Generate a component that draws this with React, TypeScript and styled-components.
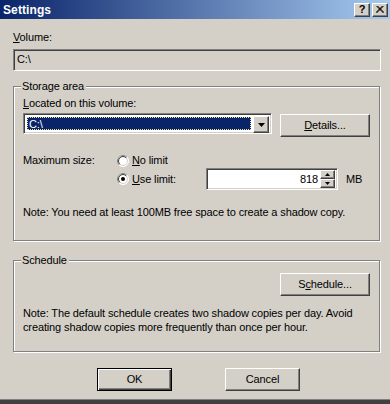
import { FC, ReactNode } from 'react';
import styled, { createGlobalStyle, css } from 'styled-components';

const face = '#d4d0c8';
const shadow = '#808080';
const darkShadow = '#404040';
const highlight = '#ffffff';
const navy = '#0a246a';

const GlobalStyle = createGlobalStyle`
  html, body {
    margin: 0;
    padding: 0;
    background: ${face};
  }
  body {
    font-family: "Liberation Sans", Arial, sans-serif;
    font-size: 11px;
    letter-spacing: -0.13px;
    color: #000;
  }
`;

const raised = css`
  border: 1px solid;
  border-color: ${highlight} ${darkShadow} ${darkShadow} ${highlight};
  box-shadow: inset -1px -1px ${shadow}, inset 1px 1px ${face};
`;

const sunken = css`
  border: 1px solid;
  border-color: ${shadow} ${highlight} ${highlight} ${shadow};
  box-shadow: inset 1px 1px ${darkShadow}, inset -1px -1px ${face};
`;

const Window = styled.div`
  width: 390px;
  height: 400px;
  background: ${face};
  border-bottom: 4px solid ${darkShadow};
  box-shadow: inset 0 -1px ${shadow};
  display: flex;
  flex-direction: column;
`;

const TitleBar = styled.div`
  height: 19px;
  background: linear-gradient(to right, ${navy}, #a6caf0);
  display: flex;
  align-items: center;
  padding: 0 2px 0 3px;
`;

const Title = styled.span`
  flex: 1;
  color: #fff;
  font-weight: bold;
  font-size: 12px;
  letter-spacing: 0.1px;
  line-height: 14px;
`;

const CaptionButton = styled.div`
  width: 16px;
  height: 14px;
  box-sizing: border-box;
  ${raised};
  background: ${face};
  display: flex;
  align-items: center;
  justify-content: center;
  font-weight: bold;
  font-size: 11px;
  line-height: 11px;
  & + & {
    margin-left: 2px;
  }
`;

const Content = styled.div`
  display: flex;
  flex-direction: column;
  padding: 0 9px 0 13px;
`;

const Label = styled.div<{ $top: number }>`
  line-height: 13px;
  margin-top: ${({ $top }) => $top}px;
`;

const ReadonlyEdit = styled.div`
  margin-top: 5px;
  height: 22px;
  box-sizing: border-box;
  ${sunken};
  background: ${face};
  padding: 3px 0 0 3px;
  line-height: 13px;
`;

const Group = styled.div<{ $top: number; $bottom: number }>`
  margin-top: ${({ $top }) => $top}px;
  width: 367px;
  box-sizing: border-box;
  border: 1px solid ${shadow};
  box-shadow: inset 1px 1px ${highlight}, 1px 1px ${highlight};
  padding: 0 9px ${({ $bottom }) => $bottom}px 9px;
  display: flex;
  flex-direction: column;
`;

const GroupCaption = styled.span`
  align-self: flex-start;
  margin: -7px 0 0 -2px;
  padding: 0 2px 0 1px;
  background: ${face};
  line-height: 13px;
`;

const ComboRow = styled.div`
  margin-top: 3px;
  display: flex;
  justify-content: space-between;
  align-items: flex-start;
`;

const Combo = styled.div`
  width: 249px;
  height: 21px;
  box-sizing: border-box;
  ${sunken};
  background: #fff;
  padding: 2px;
  display: flex;
`;

const ComboField = styled.div`
  flex: 1;
  margin: 1px 2px 1px 1px;
  background: ${navy};
  color: #fff;
  outline: 1px dotted #e8dc9c;
  outline-offset: -1px;
  padding-left: 2px;
  line-height: 15px;
`;

const ArrowButton = styled.div`
  width: 16px;
  height: 17px;
  box-sizing: border-box;
  ${raised};
  background: ${face};
  display: flex;
  align-items: center;
  justify-content: center;
`;

const PushButton = styled.div<{ $default?: boolean; $top?: number }>`
  width: 90px;
  height: 23px;
  margin-top: ${({ $top }) => $top ?? 0}px;
  box-sizing: border-box;
  ${raised};
  background: ${face};
  display: flex;
  align-items: center;
  justify-content: center;
  line-height: 13px;
  ${({ $default }) =>
    $default &&
    css`
      border: 1px solid #000;
      box-shadow: inset 1px 1px ${highlight}, inset -1px -1px ${darkShadow},
        inset -2px -2px ${shadow};
    `}
`;

const DialogButton = styled(PushButton)`
  width: 75px;
`;

const SizeGrid = styled.div`
  margin-top: 16px;
  display: grid;
  grid-template-columns: 94px 89px 132px auto;
  grid-template-rows: 15px 22px;
  align-items: center;
`;

const SizeLabel = styled.span`
  grid-column: 1;
  grid-row: 1;
  line-height: 13px;
`;

const RadioOption = styled.div<{ $col: number; $row: number }>`
  grid-column: ${({ $col }) => $col};
  grid-row: ${({ $row }) => $row};
  display: flex;
  align-items: center;
  gap: 3px;
  line-height: 13px;
`;

const SpinEdit = styled.div`
  grid-column: 3;
  grid-row: 2;
  height: 22px;
  box-sizing: border-box;
  ${sunken};
  background: #fff;
  display: flex;
  align-items: center;
  padding: 2px;
`;

const SpinValue = styled.span`
  flex: 1;
  text-align: right;
  padding-right: 2px;
  line-height: 13px;
`;

const SpinButtons = styled.div`
  display: flex;
  flex-direction: column;
`;

const SpinButton = styled.div`
  width: 15px;
  height: 9px;
  box-sizing: border-box;
  ${raised};
  background: ${face};
  display: flex;
  align-items: center;
  justify-content: center;
`;

const Unit = styled.span`
  grid-column: 4;
  grid-row: 2;
  margin-left: 8px;
  line-height: 13px;
`;

const Note = styled.div<{ $top: number }>`
  margin-top: ${({ $top }) => $top}px;
  line-height: 14px;
`;

const RightRow = styled.div`
  display: flex;
  justify-content: flex-end;
`;

const ButtonRow = styled.div`
  margin-top: 16px;
  display: flex;
  justify-content: center;
  gap: 53px;
  padding-left: 3px;
`;

const Radio: FC<{ checked?: boolean }> = ({ checked }) => (
  <svg width="12" height="12" viewBox="0 0 12 12">
    <circle cx="6" cy="6" r="5.5" fill="#fff" stroke={highlight} />
    <path d="M9.9 2.1 A5.5 5.5 0 0 0 2.1 9.9" fill="none" stroke={shadow} />
    <circle cx="6" cy="6" r="4.5" fill="#fff" stroke={face} />
    <path d="M9.2 2.8 A4.5 4.5 0 0 0 2.8 9.2" fill="none" stroke={darkShadow} />
    {checked && <circle cx="6" cy="6" r="2" fill="#000" />}
  </svg>
);

const Triangle: FC<{ w: number; up?: boolean }> = ({ w, up }) => {
  const h = Math.ceil(w / 2);
  return (
    <svg width={w} height={h} viewBox={`0 0 ${w} ${h}`}>
      <path
        d={up ? `M0 ${h} L${w / 2} 0 L${w} ${h} Z` : `M0 0 L${w} 0 L${w / 2} ${h} Z`}
        fill="#000"
      />
    </svg>
  );
};

const Key: FC<{ children: ReactNode }> = ({ children }) => <u>{children}</u>;

const App: FC = () => {
  return (
    <>
      <GlobalStyle />
      <Window>
        <TitleBar>
          <Title>Settings</Title>
          <CaptionButton>?</CaptionButton>
          <CaptionButton>
            <svg width="8" height="7" viewBox="0 0 8 7">
              <path d="M0.5 0 L7.5 7 M1.5 0 L8 6.5 M7.5 0 L0.5 7 M6.5 0 L0 6.5" stroke="#000" strokeWidth="1" />
            </svg>
          </CaptionButton>
        </TitleBar>

        <Content>
          <Label $top={12}>
            <Key>V</Key>olume:
          </Label>
          <ReadonlyEdit>C:\</ReadonlyEdit>

          <Group $top={15} $bottom={21}>
            <GroupCaption>Storage area</GroupCaption>
            <Label $top={4}>
              <Key>L</Key>ocated on this volume:
            </Label>
            <ComboRow>
              <Combo>
                <ComboField>C:\</ComboField>
                <ArrowButton>
                  <Triangle w={7} />
                </ArrowButton>
              </Combo>
              <PushButton $top={1}>
                <span>
                  <Key>D</Key>etails...
                </span>
              </PushButton>
            </ComboRow>

            <SizeGrid>
              <SizeLabel>Maximum size:</SizeLabel>
              <RadioOption $col={2} $row={1}>
                <Radio />
                <span>
                  <Key>N</Key>o limit
                </span>
              </RadioOption>
              <RadioOption $col={2} $row={2}>
                <Radio checked />
                <span>
                  <Key>U</Key>se limit:
                </span>
              </RadioOption>
              <SpinEdit>
                <SpinValue>818</SpinValue>
                <SpinButtons>
                  <SpinButton>
                    <Triangle w={5} up />
                  </SpinButton>
                  <SpinButton>
                    <Triangle w={5} />
                  </SpinButton>
                </SpinButtons>
              </SpinEdit>
              <Unit>MB</Unit>
            </SizeGrid>

            <Note $top={15}>Note: You need at least 100MB free space to create a shadow copy.</Note>
          </Group>

          <Group $top={19} $bottom={17}>
            <GroupCaption>Schedule</GroupCaption>
            <RightRow>
              <PushButton $top={6}>
                <span>
                  S<Key>c</Key>hedule...
                </span>
              </PushButton>
            </RightRow>
            <Note $top={10}>
              Note: The default schedule creates two shadow copies per day. Avoid
              <br />
              creating shadow copies more frequently than once per hour.
            </Note>
          </Group>

          <ButtonRow>
            <DialogButton $default>OK</DialogButton>
            <DialogButton>Cancel</DialogButton>
          </ButtonRow>
        </Content>
      </Window>
    </>
  );
};

export default App;
